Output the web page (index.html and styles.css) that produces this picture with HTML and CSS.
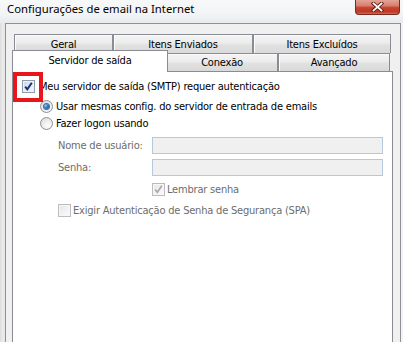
FILE: index.html
```html
<!DOCTYPE html>
<html lang="pt-BR">
<head>
<meta charset="utf-8">
<title>Configurações de email na Internet</title>
<link rel="stylesheet" href="styles.css">
</head>
<body>
<div class="window">
  <div class="titlebar">
    <span class="title">Configurações de email na Internet</span>
    <span class="close">
      <svg width="13" height="10" viewBox="0 0 13 10" aria-hidden="true">
        <path d="M2.5 1.5 L10.5 8.5 M10.5 1.5 L2.5 8.5" stroke="#5a1a12" stroke-width="3.6" stroke-linecap="square" fill="none"/>
        <path d="M2.5 1.5 L10.5 8.5 M10.5 1.5 L2.5 8.5" stroke="#ffffff" stroke-width="1.8" stroke-linecap="square" fill="none"/>
      </svg>
    </span>
  </div>
  <div class="frame">
    <div class="tabrow row1">
      <div class="tab">Geral</div>
      <div class="tab">Itens Enviados</div>
      <div class="tab">Itens Excluídos</div>
    </div>
    <div class="tabrow row2">
      <div class="tab selected">Servidor de saída</div>
      <div class="tab">Conexão</div>
      <div class="tab">Avançado</div>
    </div>
    <div class="panel">
      <span class="highlight"></span>
      <div class="opt opt-auth">
        <span class="cb checked">
          <svg width="11" height="11" viewBox="0 0 11 11" aria-hidden="true"><path d="M2.2 5.6 L4.3 8.3 L8.8 1.8" stroke="#1b2f7a" stroke-width="2" fill="none"/></svg>
        </span>
        <span class="label">Meu servidor de saída (SMTP) requer autenticação</span>
      </div>
      <div class="opt opt-radio first">
        <span class="radio on"><span class="dot"></span></span>
        <span class="label">Usar mesmas config. do servidor de entrada de emails</span>
      </div>
      <div class="opt opt-radio">
        <span class="radio"></span>
        <span class="label">Fazer logon usando</span>
      </div>
      <div class="fields">
        <span class="flabel">Nome de usuário:</span>
        <span class="input"></span>
        <span class="flabel">Senha:</span>
        <span class="input"></span>
      </div>
      <div class="opt opt-remember">
        <span class="cb disabled checked">
          <svg width="11" height="11" viewBox="0 0 11 11" aria-hidden="true"><path d="M2.2 5.6 L4.3 8.3 L8.8 1.8" stroke="#a8a8a8" stroke-width="1.6" fill="none"/></svg>
        </span>
        <span class="label dim">Lembrar senha</span>
      </div>
      <div class="opt opt-spa">
        <span class="cb disabled"></span>
        <span class="label dim">Exigir Autenticação de Senha de Segurança (SPA)</span>
      </div>
    </div>
  </div>
</div>
</body>
</html>
```

FILE: styles.css
```css
html, body {
  margin: 0;
  padding: 0;
}
body {
  width: 403px;
  height: 342px;
  overflow: hidden;
  background: linear-gradient(90deg, #dcdcdc 0, #ececec 3px, #e4e4e4 5px, #f2f3f4 6px);
  font-family: "DejaVu Sans Condensed", "DejaVu Sans", sans-serif;
  font-size: 11px;
  color: #000;
}
.window {
  display: flex;
  flex-direction: column;
  height: 342px;
}
.titlebar {
  height: 23px;
  display: flex;
  justify-content: space-between;
  align-items: flex-start;
  padding: 0 3px 0 7px;
  background: linear-gradient(180deg, #f7f8f9 0, #f3f4f5 14px, #e9eaeb 23px);
}
.title {
  font-family: "Noto Sans", "Open Sans", sans-serif;
  font-size: 11.3px;
  line-height: 16px;
  margin-top: 1px;
  color: #000;
}
.close {
  width: 45px;
  height: 15px;
  box-sizing: border-box;
  border: 1px solid #7a2a20;
  border-top: none;
  border-radius: 0 0 4px 4px;
  background: linear-gradient(180deg, #e2a496 0, #d88070 40%, #c4432f 55%, #bf3a26 85%, #d46a55 100%);
  display: flex;
  align-items: center;
  justify-content: center;
  padding-bottom: 1px;
}
.frame {
  flex: 1;
  margin: 0 2px 0 5px;
  border: 1px solid #8e9095;
  border-bottom: none;
  background: #f0f0f0;
  padding: 10px 7px 0 6px;
  display: flex;
  flex-direction: column;
}
.tabrow {
  display: grid;
  margin-left: 2px;
}
.row1 {
  grid-template-columns: 99px 140px 138px;
  height: 19px;
}
.row2 {
  grid-template-columns: 152px 112px 112px;
  height: 18px;
}
.tab {
  box-sizing: border-box;
  border: 1px solid #898c95;
  border-bottom: none;
  background: linear-gradient(180deg, #f4f4f4 0, #ececec 45%, #e1e1e1 55%, #d9d9d9 100%);
  box-shadow: inset 1px 1px 0 #fbfbfb;
  display: flex;
  align-items: center;
  justify-content: center;
  white-space: nowrap;
  line-height: 13px;
  letter-spacing: -0.2px;
}
.tab.selected {
  background: #ffffff;
  box-shadow: none;
  margin: -3px -2px -1px;
  padding-bottom: 3px;
  position: relative;
  z-index: 2;
}
.panel {
  flex: 1;
  position: relative;
  background: #ffffff;
  border: 1px solid #898c95;
  border-bottom: none;
  padding: 8px 0 0 9px;
  letter-spacing: -0.2px;
}
.highlight {
  position: absolute;
  left: 0;
  top: 0;
  width: 30px;
  height: 30px;
  box-sizing: border-box;
  border: 4px solid #e8151c;
  z-index: 3;
}
.opt {
  display: flex;
  align-items: center;
  height: 13px;
  white-space: nowrap;
}
.label {
  line-height: 13px;
}
.dim {
  color: #6d6d6d;
}
.opt-auth {
  gap: 4px;
}
.opt-radio {
  gap: 3px;
  margin-left: 18px;
  margin-top: 4px;
}
.opt-radio.first {
  margin-top: 7px;
}
.cb {
  width: 13px;
  height: 13px;
  box-sizing: border-box;
  border: 1px solid #8f9aab;
  background: linear-gradient(135deg, #c9d6e6 0, #e4ebf4 55%, #f6f8fb 100%);
  box-shadow: inset 0 0 0 1px #eef2f7;
  display: flex;
  align-items: center;
  justify-content: center;
  flex: none;
}
.cb.disabled {
  border-color: #bcbcbc;
  background: linear-gradient(135deg, #e6e6e6 0, #f3f3f3 60%, #fbfbfb 100%);
  box-shadow: inset 0 0 0 1px #f7f7f7;
}
.radio {
  width: 13px;
  height: 13px;
  box-sizing: border-box;
  border-radius: 50%;
  border: 1px solid #8d8f93;
  background: radial-gradient(circle at 65% 70%, #fdfdfd 0, #eaeaea 55%, #d4d4d4 100%);
  display: flex;
  align-items: center;
  justify-content: center;
  flex: none;
}
.radio .dot {
  width: 5px;
  height: 5px;
  border-radius: 50%;
  background: radial-gradient(circle at 35% 35%, #8fd0f5 0, #2b74c4 45%, #0d3a86 100%);
  box-shadow: 0 0 0 1px #3e6ea8;
}
.fields {
  display: grid;
  grid-template-columns: 94px 231px;
  grid-auto-rows: 17px;
  row-gap: 5px;
  align-items: center;
  margin: 7px 0 0 36px;
}
.flabel {
  color: #6d6d6d;
  line-height: 13px;
}
.input {
  height: 17px;
  box-sizing: border-box;
  border: 1px solid #b5c8dc;
  background: #f0f0f0;
}
.opt-remember {
  gap: 2px;
  margin: 7px 0 0 130px;
}
.opt-spa {
  gap: 2px;
  margin: 8px 0 0 36px;
}
```
